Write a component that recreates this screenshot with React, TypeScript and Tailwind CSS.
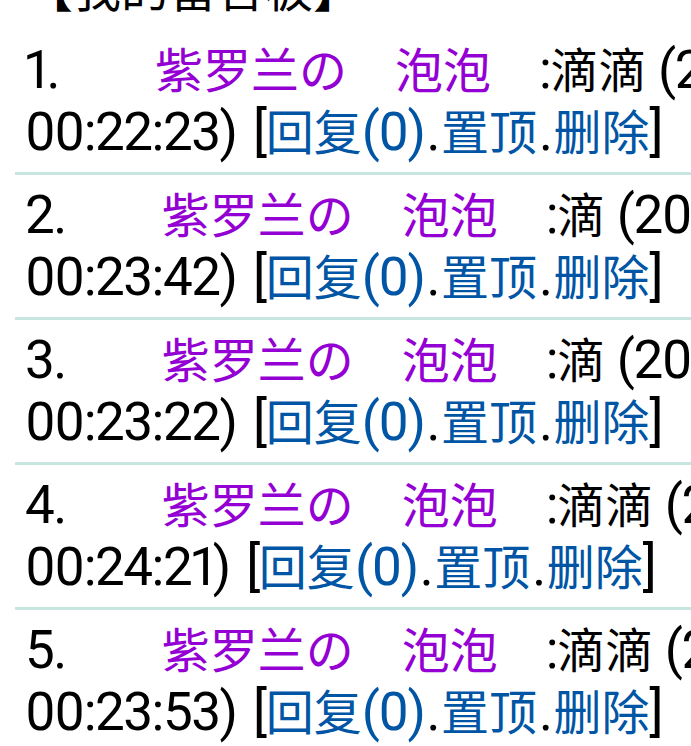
import { ReactNode } from "react";

const entries = [
  { n: 1, name: "滴滴", date: "2018-03-22", time: "00:22:23" },
  { n: 2, name: "滴", date: "2018-03-21", time: "00:23:42" },
  { n: 3, name: "滴", date: "2018-03-20", time: "00:23:22" },
  { n: 4, name: "滴滴", date: "2018-03-19", time: "00:24:21" },
  { n: 5, name: "滴滴", date: "2018-03-18", time: "00:23:53" },
];

// CJK runs are set a little smaller than the Latin text, as on the phone
function Cn({ children, className = "" }: { children: ReactNode; className?: string }) {
  return <span className={`text-[48px] tracking-normal leading-[50px] ${className}`}>{children}</span>;
}

function Link({ children }: { children: ReactNode }) {
  return <a className="text-[#0055a5]">{children}</a>;
}

export default function App() {
  return (
    <div className="w-[691px] h-[746px] overflow-hidden bg-white">
      <div className="w-[1000px] pl-[15px] mt-[-42px] font-['Roboto','Noto_Sans_CJK_SC',sans-serif] text-[53px] tracking-[-1.5px] leading-[62px] text-black proportional-nums">
        <div className="pl-[10px] pb-[10px]">
          <Cn>【我的留言板】</Cn>
        </div>
        {entries.map((e) => (
          <div key={e.n} className="pl-[10px] pt-[9px] pb-[9px] border-b-[3px] border-[#c8e6e0]">
            {e.n}.<span className="inline-block w-[96px]"></span>
            <Cn className="text-[#9400d3]">紫罗兰の　泡泡</Cn>
            <Cn>　</Cn>:<Cn>{e.name}</Cn> ({e.date} {e.time}) <span className="ml-[5px]">[</span>
            <Link>
              <Cn>回复</Cn>(0)
            </Link>
            <span className="px-[2px]">.</span>
            <Link>
              <Cn>置顶</Cn>
            </Link>
            <span className="px-[2px]">.</span>
            <Link>
              <Cn>删除</Cn>
            </Link>
            ]
          </div>
        ))}
      </div>
    </div>
  );
}
